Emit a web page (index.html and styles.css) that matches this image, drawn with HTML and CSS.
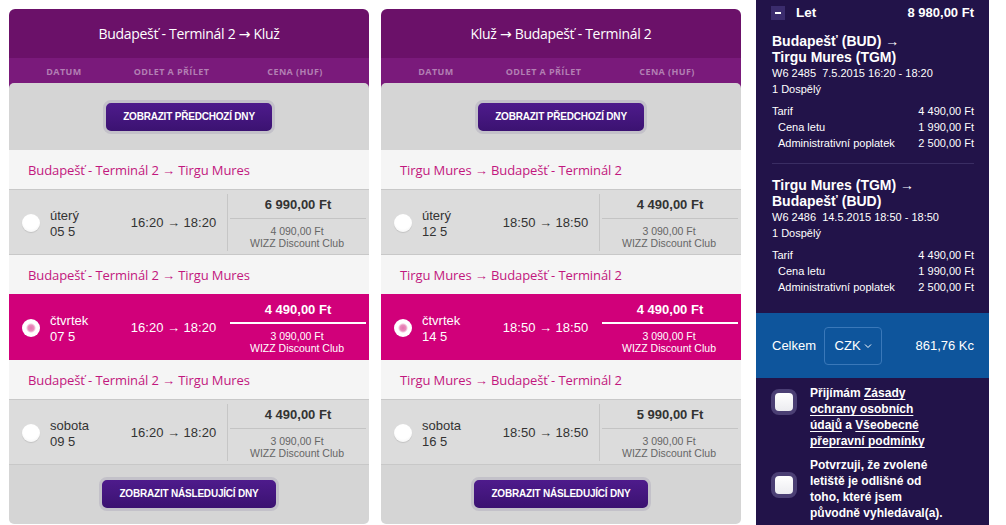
FILE: index.html
```html
<!DOCTYPE html>
<html lang="cs">
<head>
<meta charset="utf-8">
<title>Výběr letu</title>
<link rel="stylesheet" href="styles.css">
</head>
<body>
<div class="page">
  <section class="panel">
    <div class="panel-head">Budapešť - Terminál 2 → Kluž</div>
    <div class="cols"><span>DATUM</span><span>ODLET A PŘÍLET</span><span>CENA (HUF)</span></div>
    <div class="body">
      <div class="more more-top"><span class="btn">ZOBRAZIT PŘEDCHOZÍ DNY</span></div>
      <div class="route">Budapešť - Terminál 2 → Tirgu Mures</div>
      <div class="flight">
        <span class="radio"></span>
        <div class="day">úterý<br>05 5</div>
        <div class="time">16:20 → 18:20</div>
        <div class="price"><div class="main">6 990,00 Ft</div><div class="club">4 090,00 Ft<br>WIZZ Discount Club</div></div>
      </div>
      <div class="route">Budapešť - Terminál 2 → Tirgu Mures</div>
      <div class="flight selected">
        <span class="radio"></span>
        <div class="day">čtvrtek<br>07 5</div>
        <div class="time">16:20 → 18:20</div>
        <div class="price"><div class="main">4 490,00 Ft</div><div class="club">3 090,00 Ft<br>WIZZ Discount Club</div></div>
      </div>
      <div class="route">Budapešť - Terminál 2 → Tirgu Mures</div>
      <div class="flight">
        <span class="radio"></span>
        <div class="day">sobota<br>09 5</div>
        <div class="time">16:20 → 18:20</div>
        <div class="price"><div class="main">4 490,00 Ft</div><div class="club">3 090,00 Ft<br>WIZZ Discount Club</div></div>
      </div>
      <div class="more more-bottom"><span class="btn">ZOBRAZIT NÁSLEDUJÍCÍ DNY</span></div>
    </div>
  </section>

  <section class="panel panel-last">
    <div class="panel-head">Kluž → Budapešť - Terminál 2</div>
    <div class="cols"><span>DATUM</span><span>ODLET A PŘÍLET</span><span>CENA (HUF)</span></div>
    <div class="body">
      <div class="more more-top"><span class="btn">ZOBRAZIT PŘEDCHOZÍ DNY</span></div>
      <div class="route">Tirgu Mures → Budapešť - Terminál 2</div>
      <div class="flight">
        <span class="radio"></span>
        <div class="day">úterý<br>12 5</div>
        <div class="time">18:50 → 18:50</div>
        <div class="price"><div class="main">4 490,00 Ft</div><div class="club">3 090,00 Ft<br>WIZZ Discount Club</div></div>
      </div>
      <div class="route">Tirgu Mures → Budapešť - Terminál 2</div>
      <div class="flight selected">
        <span class="radio"></span>
        <div class="day">čtvrtek<br>14 5</div>
        <div class="time">18:50 → 18:50</div>
        <div class="price"><div class="main">4 490,00 Ft</div><div class="club">3 090,00 Ft<br>WIZZ Discount Club</div></div>
      </div>
      <div class="route">Tirgu Mures → Budapešť - Terminál 2</div>
      <div class="flight">
        <span class="radio"></span>
        <div class="day">sobota<br>16 5</div>
        <div class="time">18:50 → 18:50</div>
        <div class="price"><div class="main">5 990,00 Ft</div><div class="club">3 090,00 Ft<br>WIZZ Discount Club</div></div>
      </div>
      <div class="more more-bottom"><span class="btn">ZOBRAZIT NÁSLEDUJÍCÍ DNY</span></div>
    </div>
  </section>

  <aside class="side">
    <div class="side-inner">
      <div class="let"><span class="minus"></span><span>Let</span><span class="let-sum">8 980,00 Ft</span></div>

      <div class="trip">
        <div class="trip-title">Budapešť (BUD) →<br>Tirgu Mures (TGM)</div>
        <div class="trip-info">W6 2485&nbsp; 7.5.2015 16:20 - 18:20</div>
        <div class="trip-info">1 Dospělý</div>
        <div class="fare">
          <div class="fare-row"><span>Tarif</span><span>4 490,00 Ft</span></div>
          <div class="fare-row sub"><span>Cena letu</span><span>1 990,00 Ft</span></div>
          <div class="fare-row sub"><span>Administrativní poplatek</span><span>2 500,00 Ft</span></div>
        </div>
      </div>
      <div class="divider"></div>
      <div class="trip trip-second">
        <div class="trip-title">Tirgu Mures (TGM) →<br>Budapešť (BUD)</div>
        <div class="trip-info">W6 2486&nbsp; 14.5.2015 18:50 - 18:50</div>
        <div class="trip-info">1 Dospělý</div>
        <div class="fare">
          <div class="fare-row"><span>Tarif</span><span>4 490,00 Ft</span></div>
          <div class="fare-row sub"><span>Cena letu</span><span>1 990,00 Ft</span></div>
          <div class="fare-row sub"><span>Administrativní poplatek</span><span>2 500,00 Ft</span></div>
        </div>
      </div>
    </div>

    <div class="total">
      <span>Celkem</span>
      <span class="currency">CZK <svg width="8" height="6" viewBox="0 0 8 6"><path d="M1 1.5 L4 4.5 L7 1.5" fill="none" stroke="#fff" stroke-width="1"/></svg></span>
      <span class="total-sum">861,76 Kc</span>
    </div>

    <div class="side-inner">
      <div class="agree agree-first">
        <span class="check"></span>
        <div class="agree-text">Přijímám <u>Zásady</u><br><u>ochrany osobních</u><br><u>údajů</u> a <u>Všeobecné</u><br><u>přepravní podmínky</u></div>
      </div>
      <div class="agree agree-second">
        <span class="check"></span>
        <div class="agree-text">Potvrzuji, že zvolené letiště je odlišné od toho, které jsem původně vyhledával(a).</div>
      </div>
    </div>
  </aside>
</div>
</body>
</html>
```

FILE: styles.css
```css
* { box-sizing: border-box; }

body {
  margin: 0;
  background: #ffffff;
  font-family: "Liberation Sans", Arial, sans-serif;
  color: #333;
}

.page {
  display: flex;
  align-items: flex-start;
  padding-left: 9px;
  height: 525px;
  overflow: hidden;
}

.panel {
  width: 360px;
  margin-top: 9px;
  margin-right: 12px;
  display: flex;
  flex-direction: column;
}

.panel-last { margin-right: 15px; }

.panel-head {
  height: 49px;
  background: #6b1169;
  border-radius: 6px 6px 0 0;
  color: #fff;
  font-family: "Open Sans", "DejaVu Sans", sans-serif;
  font-size: 14px;
  letter-spacing: -0.3px;
  display: flex;
  align-items: center;
  justify-content: center;
  padding-bottom: 1px;
}

.cols {
  height: 30px;
  background: #7a1a7b;
  display: grid;
  grid-template-columns: 110px 105px 142px;
  font-family: "Open Sans", sans-serif;
  font-size: 9px;
  font-weight: 700;
  letter-spacing: 0.4px;
  color: #b27fb3;
  line-height: 28px;
  text-align: center;
}

.body {
  margin-top: -5px;
  background: #d5d5d5;
  border-radius: 5px;
  overflow: hidden;
}

.more {
  display: flex;
  justify-content: center;
  align-items: center;
}

.more-top { height: 67px; }
.more-bottom { height: 59px; padding-bottom: 1px; }

.btn {
  display: inline-block;
  border: 3px solid #c3c1c9;
  border-radius: 8px;
  background: linear-gradient(#4e1b8c, #3b1271);
  color: #fff;
  font-family: "Liberation Sans", Arial, sans-serif;
  font-weight: 700;
  font-size: 10px;
  line-height: 28px;
  padding: 0 17px;
  letter-spacing: -0.2px;
}

.route {
  height: 39px;
  background: #f5f5f5;
  padding-left: 19px;
  display: flex;
  align-items: center;
  font-family: "Open Sans", sans-serif;
  font-size: 13px;
  letter-spacing: -0.1px;
  color: #c2177e;
}

.flight {
  height: 66px;
  background: #dcdcdc;
  border-top: 1px solid #c8c8c8;
  border-bottom: 1px solid #c8c8c8;
  display: grid;
  grid-template-columns: 41px 70px 107px 139px;
  align-items: center;
  font-size: 13px;
  color: #333;
}

.radio {
  width: 18px;
  height: 18px;
  margin-left: 13px;
  margin-top: 2px;
  border-radius: 50%;
  background: radial-gradient(circle at 50% 40%, #ffffff 55%, #ececec 100%);
  box-shadow: 0 1px 1px rgba(0,0,0,0.12);
}

.day {
  line-height: 16px;
  padding-top: 4px;
}

.time {
  text-align: center;
  padding-top: 1px;
}

.price {
  align-self: stretch;
  margin: 4px 0 3px;
  border-left: 1px solid #c6c6c6;
  text-align: center;
}

.main {
  font-weight: 700;
  line-height: 18px;
  padding-top: 2px;
  padding-bottom: 4px;
  margin-left: 2px;
  border-bottom: 1px solid #c4c4c4;
}

.club {
  font-size: 10.5px;
  line-height: 12px;
  padding-top: 6px;
  color: #666;
}

.selected {
  background: #d1007a;
  border-color: #d1007a;
  color: #fff;
}

.selected .price { border-left-color: #d1007a; }
.selected .main { border-bottom: 2px solid #fff; padding-bottom: 3px; }
.selected .club { color: #fff; }

.selected .radio {
  background: radial-gradient(circle, #e474ae 0, #e98ebd 3px, #ffffff 5px);
  box-shadow: none;
}

/* Sidebar */
.side {
  width: 233px;
  height: 525px;
  background: #221349;
  color: #fff;
  display: flex;
  flex-direction: column;
}

.side-inner { padding: 0 15px 0 16px; }

.let {
  height: 25px;
  display: flex;
  align-items: center;
  font-weight: 700;
  font-size: 13.5px;
}

.minus {
  width: 14px;
  height: 14px;
  margin-left: -1px;
  margin-right: 11px;
  background: #3b2c6d;
  position: relative;
}

.minus::after {
  content: "";
  position: absolute;
  left: 4px;
  top: 6px;
  width: 6px;
  height: 2px;
  background: #fff;
}

.let-sum { margin-left: auto; font-size: 13px; }

.trip { margin-top: 8px; }
.trip-second { margin-top: 13px; }

.trip-title {
  font-weight: 700;
  font-size: 14px;
  line-height: 16px;
}

.trip-info {
  font-size: 11px;
  line-height: 16px;
}

.fare { margin-top: 6px; }

.fare-row {
  display: flex;
  justify-content: space-between;
  font-size: 11px;
  line-height: 16px;
}

.fare-row.sub { padding-left: 6px; }

.divider {
  margin-top: 12px;
  height: 1px;
  background: #3a2d63;
}

.total {
  margin-top: 18px;
  height: 65px;
  background: #0e559c;
  display: flex;
  align-items: center;
  padding: 0 15px 0 16px;
  font-size: 13px;
}

.currency {
  margin-left: 8px;
  width: 58px;
  height: 38px;
  border: 1px solid #3a78b9;
  border-radius: 4px;
  display: flex;
  align-items: center;
  justify-content: center;
  gap: 3px;
}

.total-sum { margin-left: auto; }

.agree {
  display: flex;
  align-items: flex-start;
  gap: 13px;
}

.agree-first { margin-top: 7px; }
.agree-second { margin-top: 8px; }

.check {
  flex: none;
  width: 26px;
  height: 26px;
  margin-left: -1px;
  border: 4px solid #4b3f74;
  border-radius: 8px;
  background: linear-gradient(#ffffff, #ececf0);
}

.agree-first .check { margin-top: 4px; }
.agree-second .check { margin-top: 15px; }

.agree-text {
  width: 136px;
  font-weight: 700;
  font-size: 12px;
  line-height: 16px;
}

.agree-text u { text-underline-offset: 2px; }
```
